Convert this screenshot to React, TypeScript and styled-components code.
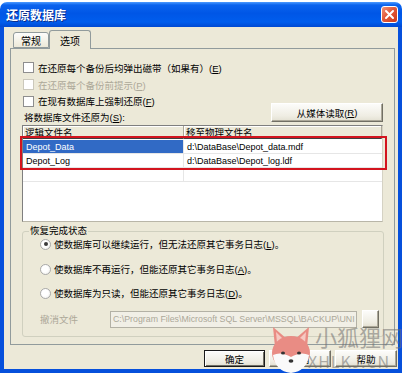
import React from "react";
import styled, { createGlobalStyle } from "styled-components";

const Global = createGlobalStyle`
  html, body { margin: 0; padding: 0; background: #ffffff; }
  body {
    font-family: "Liberation Sans", "Noto Sans CJK SC", sans-serif;
    font-size: 9.5px;
    color: #000;
  }
  * { box-sizing: border-box; }
`;

const Window = styled.div`
  position: relative;
  margin-top: 2px;
  width: 402px;
  height: 371px;
  display: flex;
  flex-direction: column;
`;

const TitleBar = styled.div`
  height: 25px;
  flex: none;
  border-radius: 7px 7px 0 0;
  background: linear-gradient(
    180deg,
    #4d9bff 0%,
    #0b63ee 12%,
    #0056e6 45%,
    #005ded 80%,
    #0049d2 100%
  );
  display: flex;
  align-items: center;
  justify-content: space-between;
  padding: 0 4px 0 6px;
`;

const Title = styled.span`
  font-family: "Noto Sans CJK SC", sans-serif;
  font-weight: 700;
  font-size: 12px;
  color: #fff;
  text-shadow: 1px 1px 0 #0b2d8c;
`;

const CloseBtn = styled.div`
  width: 17px;
  height: 17px;
  border: 1px solid #fff;
  border-radius: 3px;
  background: linear-gradient(135deg, #f0937a 0%, #e1593a 45%, #cc3b1c 100%);
  display: flex;
  align-items: center;
  justify-content: center;
`;

const Frame = styled.div`
  flex: 1;
  display: flex;
  flex-direction: column;
  background: #ece9d8;
  border-style: solid;
  border-color: #0650dc;
  border-width: 0 4px 4px 4px;
  padding: 3px 0 0 6px;
`;

const Tabs = styled.div`
  display: flex;
  align-items: flex-end;
  height: 18px;
  padding-left: 3px;
`;

const Tab = styled.div<{ $active?: boolean; $w: number }>`
  width: ${(p) => p.$w}px;
  height: ${(p) => (p.$active ? 19 : 16)}px;
  margin-bottom: ${(p) => (p.$active ? -1 : 0)}px;
  position: relative;
  z-index: ${(p) => (p.$active ? 1 : 0)};
  border: 1px solid #919b9c;
  border-bottom: ${(p) => (p.$active ? "none" : "1px solid #919b9c")};
  border-radius: 3px 3px 0 0;
  background: ${(p) =>
    p.$active ? "#ece9d8" : "linear-gradient(#fdfdfb, #ece9d8)"};
  font-family: "Noto Sans CJK SC", sans-serif;
  font-size: 10px;
  line-height: 1;
  display: flex;
  align-items: center;
  justify-content: center;
  padding-top: 1px;
`;

const Panel = styled.div`
  width: 385px;
  height: 297px;
  border: 1px solid #919b9c;
  background: #ece9d8;
  padding: 10px 11px 0 11px;
  display: flex;
  flex-direction: column;
`;

const CheckRow = styled.div<{ $h: number; $disabled?: boolean }>`
  height: ${(p) => p.$h}px;
  display: flex;
  align-items: center;
  gap: 4px;
  color: ${(p) => (p.$disabled ? "#aca899" : "#000")};
  white-space: nowrap;
`;

const Box = styled.span<{ $disabled?: boolean }>`
  width: 11px;
  height: 11px;
  flex: none;
  margin-left: 1px;
  background: #fff;
  border: 1px solid ${(p) => (p.$disabled ? "#cbc8bb" : "#8e8e8e")};
`;

const SplitRow = styled.div`
  display: flex;
  justify-content: space-between;
`;

const LeftCol = styled.div`
  display: flex;
  flex-direction: column;
`;

const Label = styled.div`
  height: 16px;
  display: flex;
  align-items: center;
  padding-left: 2px;
  white-space: nowrap;
`;

const Btn = styled.button<{ $w: number; $h?: number; $default?: boolean }>`
  width: ${(p) => p.$w}px;
  height: ${(p) => p.$h ?? 19}px;
  padding: 0;
  margin: 0;
  font: inherit;
  font-size: 9.5px;
  color: #000;
  background: linear-gradient(#fcfcfa, #efede3 70%, #e3e0d2);
  border: 1px solid;
  border-color: ${(p) =>
    p.$default ? "#1a1a1a" : "#ffffff #716f64 #716f64 #ffffff"};
  box-shadow: ${(p) =>
    p.$default
      ? "inset 1px 1px 0 #fff, inset -1px -1px 0 #716f64"
      : "inset -1px -1px 0 #aca899"};
  display: flex;
  align-items: center;
  justify-content: center;
  white-space: nowrap;
`;

const MediaBtn = styled(Btn)`
  align-self: flex-end;
  margin-bottom: 3px;
`;

const TableWrap = styled.div`
  position: relative;
  width: 361px;
  height: 97px;
  flex: none;
  border: 1px solid #7f7f7f;
  border-bottom-color: #b9b6a8;
  border-right-color: #d5d2c4;
  background: #fff;
`;

const Grid = styled.div`
  display: grid;
  grid-template-columns: 161px 1fr;
  grid-auto-rows: 14px;
`;

const HeadCell = styled.div`
  height: 13px;
  background: #ece9d8;
  border-right: 1px solid #aca899;
  border-bottom: 1px solid #404040;
  box-shadow: inset 1px 1px 0 #fff;
  padding-left: 2px;
  display: flex;
  align-items: center;
  white-space: nowrap;
  overflow: hidden;
`;

const Cell = styled.div<{ $sel?: boolean; $left?: boolean }>`
  height: 14px;
  padding-left: 3px;
  display: flex;
  align-items: center;
  white-space: nowrap;
  overflow: hidden;
  font-size: 9px;
  background: ${(p) => (p.$sel ? "#316ac5" : "#fff")};
  color: ${(p) => (p.$sel ? "#fff" : "#000")};
  border-bottom: 1px solid #e6e6e6;
  border-right: ${(p) => (p.$left ? "1px solid #e6e6e6" : "none")};
`;

const RedMark = styled.div`
  position: absolute;
  left: -3px;
  top: 10px;
  width: 367px;
  height: 34px;
  border: 2px solid #d3141e;
  pointer-events: none;
`;

const Group = styled.fieldset`
  margin: 3px 0 0 0;
  padding: 0 0 7px 0;
  width: 362px;
  height: 112px;
  border: 1px solid #d0d0bf;
  border-radius: 3px;
  display: flex;
  flex-direction: column;
`;

const Legend = styled.legend`
  margin-left: 6px;
  padding: 0 1px;
  line-height: 12px;
`;

const RadioRow = styled.div<{ $mt: number }>`
  height: 14px;
  margin-top: ${(p) => p.$mt}px;
  padding-left: 17px;
  display: flex;
  align-items: center;
  gap: 3px;
  white-space: nowrap;
`;

const Radio = styled.span<{ $on?: boolean }>`
  width: 11px;
  height: 11px;
  flex: none;
  border-radius: 50%;
  border: 1px solid #a9a9a9;
  background: radial-gradient(circle at 40% 40%, #fff 40%, #ecebe6 100%);
  display: flex;
  align-items: center;
  justify-content: center;
  &::after {
    content: "";
    display: ${(p) => (p.$on ? "block" : "none")};
    width: 4px;
    height: 4px;
    border-radius: 50%;
    background: #3a3a3a;
  }
`;

const UndoRow = styled.div`
  margin-top: 10px;
  padding-left: 17px;
  display: flex;
  align-items: center;
`;

const Muted = styled.span`
  width: 70px;
  color: #aca899;
  white-space: nowrap;
`;

const PathBox = styled.div`
  width: 247px;
  height: 17px;
  border: 1px solid #b3b1a5;
  background: #f1efe6;
  color: #aca899;
  font-size: 8.8px;
  padding-left: 2px;
  display: flex;
  align-items: center;
  white-space: nowrap;
  overflow: hidden;
`;

const SmallBtn = styled(Btn)`
  margin-left: 5px;
`;

const Footer = styled.div`
  margin-top: 5px;
  padding-right: 1px;
  display: flex;
  justify-content: flex-end;
  gap: 4px;
`;

const Watermark = styled.div`
  position: absolute;
  left: 266px;
  top: 318px;
  width: 136px;
  height: 56px;
  pointer-events: none;
`;

const WmText = styled.div<{ $top: number; $left: number; $size: number; $ls?: number }>`
  position: absolute;
  top: ${(p) => p.$top}px;
  left: ${(p) => p.$left}px;
  font-family: "Noto Sans CJK SC", sans-serif;
  font-size: ${(p) => p.$size}px;
  line-height: 1;
  color: rgba(110, 110, 110, 0.55);
  white-space: nowrap;
  letter-spacing: ${(p) => p.$ls ?? 0}px;
`;

const Fox = styled.svg`
  position: absolute;
  left: 0;
  top: 3px;
`;

const U = styled.u`
  text-decoration: underline;
`;

export default function App() {
  return (
    <>
      <Global />
      <Window>
        <TitleBar>
          <Title>还原数据库</Title>
          <CloseBtn>
            <svg width="11" height="11" viewBox="0 0 11 11">
              <path d="M2 2 L9 9 M9 2 L2 9" stroke="#fff" strokeWidth="2" strokeLinecap="round" />
            </svg>
          </CloseBtn>
        </TitleBar>
        <Frame>
          <Tabs>
            <Tab $w={36}>常规</Tab>
            <Tab $w={42} $active>
              选项
            </Tab>
          </Tabs>
          <Panel>
            <CheckRow $h={17}>
              <Box />
              <span>
                在还原每个备份后均弹出磁带（如果有）(<U>E</U>)
              </span>
            </CheckRow>
            <CheckRow $h={17} $disabled>
              <Box $disabled />
              <span>
                在还原每个备份前提示(<U>P</U>)
              </span>
            </CheckRow>
            <SplitRow>
              <LeftCol>
                <CheckRow $h={16}>
                  <Box />
                  <span>
                    在现有数据库上强制还原(<U>F</U>)
                  </span>
                </CheckRow>
                <Label>
                  将数据库文件还原为(<U>S</U>):
                </Label>
              </LeftCol>
              <MediaBtn $w={112}>
                从媒体读取(<U>R</U>)
              </MediaBtn>
            </SplitRow>
            <TableWrap>
              <Grid>
                <HeadCell>逻辑文件名</HeadCell>
                <HeadCell>移至物理文件名</HeadCell>
                <Cell $sel $left>
                  Depot_Data
                </Cell>
                <Cell>d:\DataBase\Depot_data.mdf</Cell>
                <Cell $left>Depot_Log</Cell>
                <Cell>d:\DataBase\Depot_log.ldf</Cell>
                <Cell $left />
                <Cell />
              </Grid>
              <RedMark />
            </TableWrap>
            <Group>
              <Legend>恢复完成状态</Legend>
              <RadioRow $mt={0}>
                <Radio $on />
                <span>
                  使数据库可以继续运行，但无法还原其它事务日志(<U>L</U>)。
                </span>
              </RadioRow>
              <RadioRow $mt={11}>
                <Radio />
                <span>
                  使数据库不再运行，但能还原其它事务日志(<U>A</U>)。
                </span>
              </RadioRow>
              <RadioRow $mt={10}>
                <Radio />
                <span>
                  使数据库为只读，但能还原其它事务日志(<U>D</U>)。
                </span>
              </RadioRow>
              <UndoRow>
                <Muted>撤消文件</Muted>
                <PathBox>C:\Program Files\Microsoft SQL Server\MSSQL\BACKUP\UNI</PathBox>
                <SmallBtn $w={17} $h={18} />
              </UndoRow>
            </Group>
          </Panel>
          <Footer>
            <Btn $w={61} $h={17} $default>
              确定
            </Btn>
            <Btn $w={62} $h={17}>
              取消
            </Btn>
            <Btn $w={62} $h={17}>
              帮助
            </Btn>
          </Footer>
        </Frame>
        <Watermark>
          <WmText $top={5} $left={49} $size={22}>
            小狐狸网
          </WmText>
          <WmText $top={33} $left={42} $size={16} $ls={1}>
            XHLKJ.CN
          </WmText>
          <Fox width="50" height="52" viewBox="0 0 48 52">
            <path d="M6 4 L20 16 L8 24 Z" fill="#e98c84" />
            <path d="M42 4 L28 16 L40 24 Z" fill="#e98c84" />
            <path d="M9 9 L16 16 L10 20 Z" fill="#f6c9c2" />
            <path d="M39 9 L32 16 L38 20 Z" fill="#f6c9c2" />
            <ellipse cx="24" cy="30" rx="19" ry="17" fill="#e98c84" />
            <path d="M6 32 Q14 28 24 34 Q34 28 42 32 Q40 48 24 50 Q8 48 6 32 Z" fill="#fafafa" />
            <ellipse cx="16" cy="30" rx="2" ry="1.6" fill="#333" />
            <ellipse cx="32" cy="30" rx="2" ry="1.6" fill="#333" />
            <ellipse cx="24" cy="38" rx="2.4" ry="1.8" fill="#333" />
          </Fox>
        </Watermark>
      </Window>
    </>
  );
}
